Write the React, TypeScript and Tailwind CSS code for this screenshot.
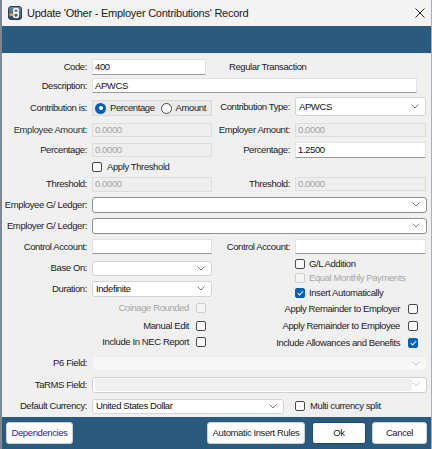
import React from "react";

const BLUE = "bg-[#2a5b7e]";

const Chevron = ({ light }: { light?: boolean }) => (
  <svg width="8" height="5" viewBox="0 0 8 5" className="shrink-0">
    <path d="M0.5 0.5 L4 4 L7.5 0.5" stroke={light ? "#c4c4c4" : "#7c7c7c"} strokeWidth="1" fill="none" />
  </svg>
);

const Label = ({ children, className = "" }: { children?: React.ReactNode; className?: string }) => (
  <div className={`w-[86px] shrink-0 text-right pr-[1px] whitespace-nowrap ${className}`}>{children}</div>
);

const TextBox = ({ value, className, disabled }: { value?: string; className: string; disabled?: boolean }) => (
  <div
    className={`${className} flex items-center pl-[2px] border ${
      disabled
        ? "bg-[#eeeeee] border-[#dddddd] text-[#a3a3a3]"
        : "bg-white border-[#e2e2e2] border-b-[#9a9a9a] text-[#111]"
    }`}
  >
    {value}
  </div>
);

const Combo = ({
  value,
  className,
  dark,
  disabled,
}: {
  value?: string;
  className: string;
  dark?: boolean;
  disabled?: boolean;
}) => (
  <div
    className={`${className} flex items-center justify-between pl-[3px] pr-[6px] rounded-[3px] border ${
      disabled ? "bg-[#f7f7f7] border-[#eeeeee]" : dark ? "bg-white border-[#8e8e8e]" : "bg-white border-[#d4d4d4]"
    }`}
  >
    <span className="text-[#111] whitespace-nowrap">{value}</span>
    <Chevron light={disabled} />
  </div>
);

const Check = ({ checked, disabled }: { checked?: boolean; disabled?: boolean }) => (
  <div
    className={`w-[10px] h-[10px] shrink-0 rounded-[2px] border flex items-center justify-center ${
      checked
        ? "bg-[#005fb8] border-[#005fb8]"
        : disabled
        ? "bg-[#f5f5f5] border-[#cfcfcf]"
        : "bg-[#fbfbfb] border-[#4a4a4a]"
    }`}
  >
    {checked && (
      <svg width="7" height="6" viewBox="0 0 7 6">
        <path d="M0.8 3.2 L2.6 5 L6.2 1" stroke="#fff" strokeWidth="1.1" fill="none" />
      </svg>
    )}
  </div>
);

const Radio = ({ checked }: { checked?: boolean }) =>
  checked ? (
    <div className="w-[11px] h-[11px] shrink-0 rounded-full bg-[#005fb8] flex items-center justify-center">
      <div className="w-[4px] h-[4px] rounded-full bg-white" />
    </div>
  ) : (
    <div className="w-[11px] h-[11px] shrink-0 rounded-full border border-[#4a4a4a] bg-[#fbfbfb]" />
  );

const AppIcon = () => (
  <svg width="14" height="14" viewBox="0 0 14 14">
    <defs>
      <linearGradient id="ig" x1="0" y1="0" x2="0" y2="1">
        <stop offset="0" stopColor="#6f8aa6" />
        <stop offset="1" stopColor="#2f4b66" />
      </linearGradient>
    </defs>
    <rect x="0.5" y="0.5" width="13" height="13" rx="2.5" fill="url(#ig)" stroke="#2b3f55" />
    <circle cx="8" cy="4.8" r="2.3" fill="none" stroke="#fff" strokeWidth="1.4" />
    <circle cx="8" cy="9" r="2.5" fill="none" stroke="#fff" strokeWidth="1.4" />
    <rect x="1.5" y="7.5" width="4" height="2.4" rx="0.6" fill="#f0a030" />
  </svg>
);

export default function App() {
  return (
    <div className="w-[432px] h-[449px] overflow-hidden flex flex-col bg-[#f0f0f0] border-l-2 border-r border-l-[#7d8894] border-r-[#a7b0b9] font-['Liberation_Sans',Arial,sans-serif] text-[9.5px] leading-[12px] tracking-[-0.4px] text-[#1c1c1c]">
      {/* title bar */}
      <div className="h-[26px] shrink-0 bg-[#f3f3f3] flex items-center pl-[6px] pr-[6px]">
        <AppIcon />
        <span className="ml-[5px] text-[11px] tracking-[-0.25px] text-[#1a1a1a]">
          Update 'Other - Employer Contributions' Record
        </span>
        <div className="flex-1" />
        <svg width="10" height="10" viewBox="0 0 10 10">
          <path d="M0.5 0.5 L9.5 9.5 M9.5 0.5 L0.5 9.5" stroke="#222" strokeWidth="1" />
        </svg>
      </div>
      <div className={`h-[27px] shrink-0 ${BLUE}`} />
      <div className="h-[1px] shrink-0 bg-[#e4e9ee]" />

      {/* form body */}
      <div className="flex flex-col pt-[3px]">
        <div className="flex items-center h-[20px]">
          <Label>Code:</Label>
          <TextBox value="400" className="ml-[4px] w-[114px] h-[16px]" />
          <span className="ml-[23px]">Regular Transaction</span>
        </div>
        <div className="flex items-center h-[17px]">
          <Label>Description:</Label>
          <TextBox value="APWCS" className="ml-[4px] w-[325px] h-[15px]" />
        </div>
        <div className="flex items-center h-[25px]">
          <Label className="pt-[3px]">Contribution is:</Label>
          <div className="ml-[4px] mt-[3px] w-[120px] h-[16px] flex items-center pl-[2px] bg-[#e9e9e9] border border-[#dadada]">
            <Radio checked />
            <span className="ml-[4px]">Percentage</span>
            <div className="ml-[6px]">
              <Radio />
            </div>
            <span className="ml-[4px]">Amount</span>
          </div>
          <div className="w-[78px] shrink-0 text-right whitespace-nowrap">Contribution Type:</div>
          <Combo value="APWCS" className="ml-[5px] w-[131px] h-[19px]" />
        </div>
        <div className="flex items-center h-[21px]">
          <Label className="text-[#333]">Employee Amount:</Label>
          <TextBox value="0.0000" disabled className="ml-[4px] w-[120px] h-[14px]" />
          <div className="w-[78px] shrink-0 text-right whitespace-nowrap">Employer Amount:</div>
          <TextBox value="0.0000" disabled className="ml-[5px] w-[131px] h-[14px]" />
        </div>
        <div className="flex items-center h-[19px]">
          <Label>Percentage:</Label>
          <TextBox value="0.0000" disabled className="ml-[4px] w-[120px] h-[14px]" />
          <div className="w-[78px] shrink-0 text-right whitespace-nowrap">Percentage:</div>
          <TextBox value="1.2500" className="ml-[5px] w-[131px] h-[16px]" />
        </div>
        <div className="flex items-center h-[15px]">
          <div className="w-[86px] shrink-0" />
          <div className="ml-[4px] flex items-center">
            <Check />
            <span className="ml-[5px]">Apply Threshold</span>
          </div>
        </div>
        <div className="flex items-center h-[20px]">
          <Label>Threshold:</Label>
          <TextBox value="0.0000" disabled className="ml-[4px] w-[120px] h-[15px]" />
          <div className="w-[78px] shrink-0 text-right whitespace-nowrap">Threshold:</div>
          <TextBox value="0.0000" disabled className="ml-[5px] w-[131px] h-[14px]" />
        </div>
        <div className="flex items-center h-[21px]">
          <Label>Employee G/ Ledger:</Label>
          <Combo dark className="ml-[4px] w-[335px] h-[16px]" />
        </div>
        <div className="flex items-center h-[21px]">
          <Label>Employer G/ Ledger:</Label>
          <Combo dark className="ml-[4px] w-[335px] h-[16px]" />
        </div>
        <div className="flex items-center h-[21px]">
          <Label>Control Account:</Label>
          <TextBox className="ml-[4px] w-[120px] h-[15px]" />
          <div className="w-[78px] shrink-0 text-right whitespace-nowrap">Control Account:</div>
          <TextBox className="ml-[5px] w-[131px] h-[15px]" />
        </div>

        {/* two column block */}
        <div className="flex h-[95px]">
          <div className="w-[210px] shrink-0 flex flex-col">
            <div className="flex items-center h-[22px]">
              <Label>Base On:</Label>
              <Combo className="ml-[4px] w-[120px] h-[15px]" />
            </div>
            <div className="flex items-center h-[19px]">
              <Label>Duration:</Label>
              <Combo value="Indefinite" className="ml-[4px] w-[120px] h-[16px]" />
            </div>
            <div className="flex items-center justify-end pr-[6px] h-[20px]">
              <span className="text-[#a6a6a6]">Coinage Rounded</span>
              <div className="ml-[7px]">
                <Check disabled />
              </div>
            </div>
            <div className="flex items-center justify-end pr-[6px] h-[16px]">
              <span>Manual Edit</span>
              <div className="ml-[7px]">
                <Check />
              </div>
            </div>
            <div className="flex items-center justify-end pr-[6px] h-[16px]">
              <span>Include In NEC Report</span>
              <div className="ml-[7px]">
                <Check />
              </div>
            </div>
          </div>
          <div className="flex-1 flex flex-col">
            <div className="flex items-center pl-[83px] h-[13px]">
              <Check />
              <span className="ml-[4px]">G/L Addition</span>
            </div>
            <div className="flex items-center pl-[83px] h-[15px]">
              <Check disabled />
              <span className="ml-[4px] text-[#a6a6a6]">Equal Monthly Payments</span>
            </div>
            <div className="flex items-center pl-[83px] h-[15px]">
              <Check checked />
              <span className="ml-[4px]">Insert Automatically</span>
            </div>
            <div className="flex items-center justify-end pr-[13px] h-[18px]">
              <span>Apply Remainder to Employer</span>
              <div className="ml-[8px]">
                <Check />
              </div>
            </div>
            <div className="flex items-center justify-end pr-[13px] h-[16px]">
              <span>Apply Remainder to Employee</span>
              <div className="ml-[8px]">
                <Check />
              </div>
            </div>
            <div className="flex items-center justify-end pr-[13px] h-[18px]">
              <span>Include Allowances and Benefits</span>
              <div className="ml-[8px]">
                <Check checked />
              </div>
            </div>
          </div>
        </div>

        <div className="flex items-center h-[22px]">
          <Label>P6 Field:</Label>
          <Combo disabled className="ml-[4px] w-[335px] h-[15px]" />
        </div>
        <div className="flex items-center h-[21px]">
          <Label>TaRMS Field:</Label>
          <div className="ml-[4px] w-[335px] h-[16px] flex items-center justify-between pl-[2px] pr-[6px] rounded-[3px] border border-[#cfcfcf] bg-white">
            <div className="h-[12px] w-[317px] bg-[#efefef]" />
            <Chevron light />
          </div>
        </div>
        <div className="flex items-center h-[22px]">
          <Label>Default Currency:</Label>
          <Combo value="United States Dollar" className="ml-[4px] w-[192px] h-[15px]" />
          <div className="ml-[11px]">
            <Check />
          </div>
          <span className="ml-[5px]">Multi currency split</span>
        </div>
      </div>

      {/* footer */}
      <div className={`h-[32px] shrink-0 flex items-center pl-[4px] pr-[4px] ${BLUE}`}>
        <button className="w-[67px] h-[22px] rounded-[3px] bg-white border border-[#d0d0d0] text-[#2323d6]">
          Dependencies
        </button>
        <div className="flex-1" />
        <button className="w-[98px] h-[22px] rounded-[3px] bg-white border border-[#d0d0d0]">
          Automatic Insert Rules
        </button>
        <button className="ml-[7px] w-[54px] h-[22px] rounded-[3px] bg-white border border-[#1d4a70]">Ok</button>
        <button className="ml-[6px] w-[55px] h-[22px] rounded-[3px] bg-white border border-[#d0d0d0]">Cancel</button>
      </div>
    </div>
  );
}
